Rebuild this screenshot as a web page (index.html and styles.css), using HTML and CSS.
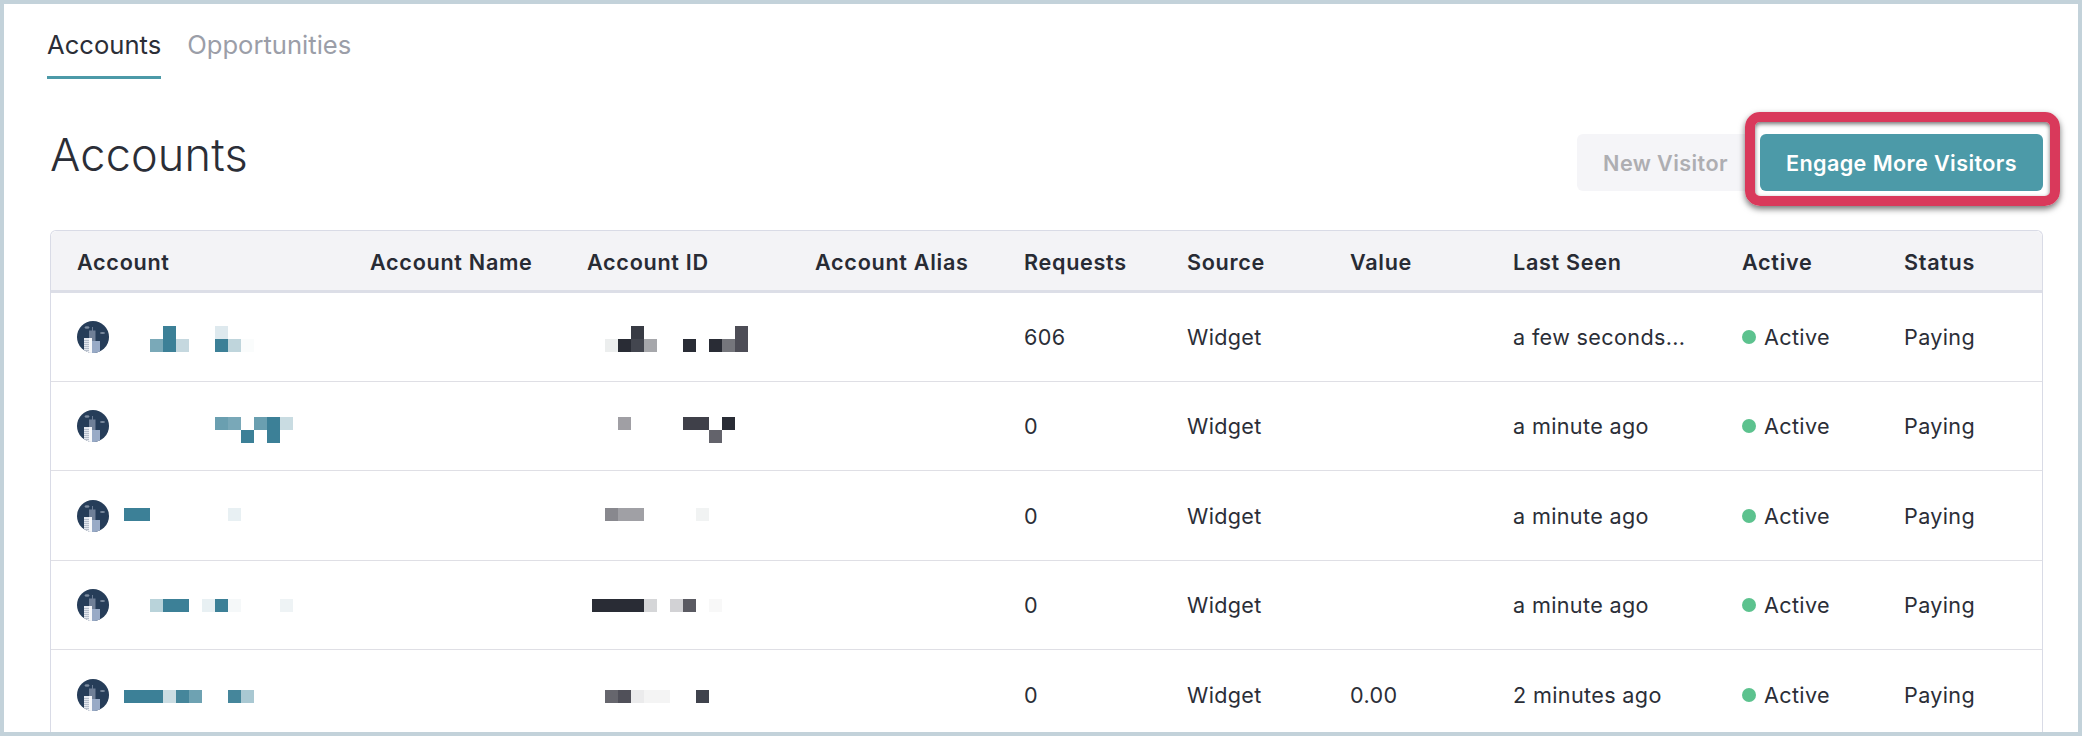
FILE: index.html
```html
<!DOCTYPE html>
<html lang="en">
<head>
<meta charset="utf-8">
<title>Accounts</title>
<link rel="stylesheet" href="styles.css">
</head>
<body>
<svg class="defs" width="0" height="0" aria-hidden="true">
  <defs>
    <clipPath id="avatar-clip"><circle cx="16" cy="16" r="16"/></clipPath>
    <symbol id="avatar" viewBox="0 0 32 32">
      <g clip-path="url(#avatar-clip)">
        <rect width="32" height="32" fill="#263d59"/>
        <ellipse cx="10" cy="6.5" rx="2.5" ry="1.2" fill="#7d8ca0"/>
        <ellipse cx="25.5" cy="12" rx="2.5" ry="1.1" fill="#7d8ca0"/>
        <rect x="15" y="6" width="0.8" height="4" fill="#7d8ca3"/>
        <rect x="12" y="9.5" width="6.5" height="23" fill="#6f7f97"/>
        <rect x="15" y="20" width="8" height="12" fill="#98aac6"/>
        <rect x="7" y="17" width="8" height="15" fill="#e4e8ef"/>
        <rect x="12" y="17" width="3" height="15" fill="#f7f8fa"/>
        <path d="M7 19.5h5M7 21.5h5M7 23.5h5M7 25.5h5M7 27.5h5M7 29.5h5" stroke="#a9b2c2" stroke-width="0.8"/>
      </g>
    </symbol>
  </defs>
</svg>
<main class="frame">
  <nav class="tabs">
    <a class="tab tab-active">Accounts</a>
    <a class="tab">Opportunities</a>
  </nav>
  <header class="page-head">
    <h1 class="title">Accounts</h1>
    <div class="actions">
      <button class="btn btn-muted">New Visitor</button>
      <button class="btn btn-primary">Engage More Visitors</button>
    </div>
  </header>
  <section class="table">
    <div class="row row-head">
      <div>Account</div><div>Account Name</div><div>Account ID</div><div>Account Alias</div><div>Requests</div><div>Source</div><div>Value</div><div>Last Seen</div><div>Active</div><div>Status</div>
    </div>
    <div class="row">
      <div><svg class="avatar"><use href="#avatar"/></svg></div><div></div><div></div><div></div><div>606</div><div>Widget</div><div></div><div class="clip">a few seconds...</div><div class="state"><span class="dot"></span>Active</div><div>Paying</div>
    </div>
    <div class="row">
      <div><svg class="avatar"><use href="#avatar"/></svg></div><div></div><div></div><div></div><div>0</div><div>Widget</div><div></div><div class="clip">a minute ago</div><div class="state"><span class="dot"></span>Active</div><div>Paying</div>
    </div>
    <div class="row">
      <div><svg class="avatar"><use href="#avatar"/></svg></div><div></div><div></div><div></div><div>0</div><div>Widget</div><div></div><div class="clip">a minute ago</div><div class="state"><span class="dot"></span>Active</div><div>Paying</div>
    </div>
    <div class="row">
      <div><svg class="avatar"><use href="#avatar"/></svg></div><div></div><div></div><div></div><div>0</div><div>Widget</div><div></div><div class="clip">a minute ago</div><div class="state"><span class="dot"></span>Active</div><div>Paying</div>
    </div>
    <div class="row">
      <div><svg class="avatar"><use href="#avatar"/></svg></div><div></div><div></div><div></div><div>0</div><div>Widget</div><div>0.00</div><div class="clip">2 minutes ago</div><div class="state"><span class="dot"></span>Active</div><div>Paying</div>
    </div>
  </section>

  <svg class="redactions" width="2082" height="736" viewBox="0 0 2082 736" aria-hidden="true" shape-rendering="crispEdges">
    <!-- names -->
    <rect x="163" y="326" width="13" height="13" fill="#3c8097"/>
    <rect x="215" y="326" width="13" height="13" fill="#dee9ee"/>
    <rect x="150" y="339" width="13" height="13" fill="#7aa9b8"/>
    <rect x="163" y="339" width="13" height="13" fill="#3c8097"/>
    <rect x="176" y="339" width="13" height="13" fill="#c5d8df"/>
    <rect x="215" y="339" width="13" height="13" fill="#3c8097"/>
    <rect x="228" y="339" width="13" height="13" fill="#bfd5dc"/>
    <rect x="241" y="339" width="13" height="13" fill="#fafcfc"/>

    <rect x="215" y="417" width="13" height="13" fill="#6a9fb0"/>
    <rect x="228" y="417" width="13" height="13" fill="#79a8b8"/>
    <rect x="254" y="417" width="13" height="13" fill="#6a9fb0"/>
    <rect x="267" y="417" width="13" height="13" fill="#3c8097"/>
    <rect x="280" y="417" width="13" height="13" fill="#c9dce2"/>
    <rect x="241" y="430" width="13" height="13" fill="#3c8097"/>
    <rect x="267" y="430" width="13" height="13" fill="#3c8097"/>

    <rect x="124" y="508" width="26" height="13" fill="#3c8097"/>
    <rect x="228" y="508" width="13" height="13" fill="#e8f0f3"/>

    <rect x="150" y="599" width="13" height="13" fill="#b9d3da"/>
    <rect x="163" y="599" width="26" height="13" fill="#3c8097"/>
    <rect x="202" y="599" width="13" height="13" fill="#e8f0f3"/>
    <rect x="215" y="599" width="13" height="13" fill="#3c8097"/>
    <rect x="228" y="599" width="13" height="13" fill="#f5f8f9"/>
    <rect x="280" y="599" width="13" height="13" fill="#eef3f5"/>

    <rect x="124" y="690" width="39" height="13" fill="#3c8097"/>
    <rect x="163" y="690" width="13" height="13" fill="#cbdde3"/>
    <rect x="176" y="690" width="13" height="13" fill="#45869b"/>
    <rect x="189" y="690" width="13" height="13" fill="#6ea2b2"/>
    <rect x="228" y="690" width="13" height="13" fill="#45869b"/>
    <rect x="241" y="690" width="13" height="13" fill="#a9c8d2"/>
    <!-- ids -->
    <rect x="631" y="326" width="13" height="13" fill="#383b44"/>
    <rect x="735" y="326" width="13" height="13" fill="#4d4d56"/>
    <rect x="605" y="339" width="13" height="13" fill="#eceeee"/>
    <rect x="618" y="339" width="13" height="13" fill="#292c35"/>
    <rect x="631" y="339" width="13" height="13" fill="#43464f"/>
    <rect x="644" y="339" width="13" height="13" fill="#a6a7ab"/>
    <rect x="683" y="339" width="13" height="13" fill="#292c35"/>
    <rect x="709" y="339" width="13" height="13" fill="#292c35"/>
    <rect x="722" y="339" width="13" height="13" fill="#75767c"/>
    <rect x="735" y="339" width="13" height="13" fill="#4d4d56"/>

    <rect x="618" y="417" width="13" height="13" fill="#a09fa4"/>
    <rect x="683" y="417" width="26" height="13" fill="#3f4049"/>
    <rect x="722" y="417" width="13" height="13" fill="#292c35"/>
    <rect x="709" y="430" width="13" height="13" fill="#63636b"/>

    <rect x="605" y="508" width="13" height="13" fill="#88888e"/>
    <rect x="618" y="508" width="26" height="13" fill="#a0a0a5"/>
    <rect x="696" y="508" width="13" height="13" fill="#f1f3f3"/>

    <rect x="592" y="599" width="52" height="13" fill="#292c35"/>
    <rect x="644" y="599" width="13" height="13" fill="#d5d6d8"/>
    <rect x="670" y="599" width="13" height="13" fill="#d2d2d5"/>
    <rect x="683" y="599" width="13" height="13" fill="#5a5a62"/>
    <rect x="709" y="599" width="13" height="13" fill="#f8f8f8"/>

    <rect x="605" y="690" width="13" height="13" fill="#66666d"/>
    <rect x="618" y="690" width="13" height="13" fill="#505059"/>
    <rect x="631" y="690" width="13" height="13" fill="#ebebec"/>
    <rect x="644" y="690" width="26" height="13" fill="#f4f4f4"/>
    <rect x="696" y="690" width="13" height="13" fill="#40434d"/>
  </svg>
  <div class="callout" aria-hidden="true"></div>
</main>
</body>
</html>
```
FILE: styles.css
```css
* { box-sizing: border-box; }
html, body { margin: 0; padding: 0; background: #fff; }
body {
  width: 2082px;
  height: 736px;
  overflow: hidden;
  font-family: Inter, "Liberation Sans", sans-serif;
  color: #2b2e37;
}
.defs { position: absolute; }
.frame {
  position: relative;
  width: 2082px;
  height: 736px;
  border: 4px solid #c3d2da;
  padding: 0 35px 0 46px;
  overflow: hidden;
  background: #fff;
}
.tabs {
  display: flex;
  gap: 26px;
  margin-left: -3px;
  height: 75px;
}
.tab {
  display: block;
  height: 75px;
  padding: 25px 0 0;
  font-size: 25.6px;
  line-height: 32px;
  color: #9b9ea8;
}
.tab-active {
  color: #2b2e37;
  border-bottom: 3px solid #4c9aa8;
}
.page-head {
  display: flex;
  justify-content: space-between;
  align-items: flex-start;
  margin-top: 55px;
  height: 57px;
}
.title {
  margin: -7px 0 0;
  font-size: 45px;
  line-height: 56px;
  font-weight: 350;
  letter-spacing: 0.2px;
  color: #2b2e37;
}
.actions { display: flex; gap: 6px; }
.btn {
  height: 57px;
  padding: 0 20px;
  border: 0;
  border-radius: 6px;
  font-family: inherit;
  font-size: 21.6px;
  font-weight: 600;
  letter-spacing: 0.4px;
}
.btn-muted { width: 177px; background: #f5f5f8; color: #aeaeb2; }
.btn-primary { width: 283px; background: #4c9aa8; color: #fff; }
.table {
  margin-top: 39px;
  width: 1993px;
  height: 540px;
  border: 1px solid #d9dbe6;
  border-bottom: 0;
  border-radius: 6px 6px 0 0;
  font-size: 21.6px;
  letter-spacing: 0.35px;
}
.row {
  display: grid;
  grid-template-columns: 293px 217px 228px 209px 163px 163px 163px 229px 162px 1fr;
  align-items: center;
  height: 89.5px;
  padding: 1px 0 0 26px;
  border-bottom: 1.5px solid #dfdfe5;
}
.row-head + .row { height: 88.5px; }
.row-head {
  height: 62px;
  padding-top: 2px;
  background: #f3f3f6;
  border-bottom: 3px solid #dcdee7;
  border-radius: 6px 6px 0 0;
  font-weight: 600;
  letter-spacing: 0.7px;
  color: #282b34;
}
.avatar { display: block; width: 32px; height: 32px; }
.clip { white-space: nowrap; }
.state { display: flex; align-items: center; gap: 8px; }
.dot {
  width: 14px;
  height: 14px;
  border-radius: 50%;
  background: #5cc28e;
}
.redactions {
  position: absolute;
  left: -4px;
  top: -4px;
  pointer-events: none;
}
.callout {
  position: absolute;
  left: 1741px;
  top: 108px;
  width: 315px;
  height: 94px;
  border: 10px solid #d9395b;
  border-radius: 15px;
  box-shadow: 0 3px 6px rgba(0, 0, 0, .55), inset 0 2px 4px rgba(0, 0, 0, .55);
  pointer-events: none;
}
```
